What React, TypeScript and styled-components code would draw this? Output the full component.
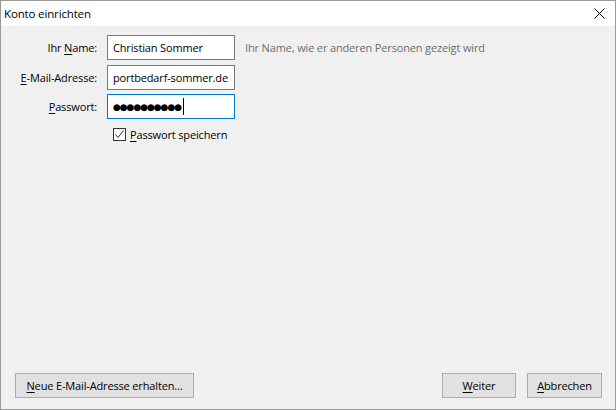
import React from "react";
import styled, { createGlobalStyle } from "styled-components";

const Global = createGlobalStyle`
  html, body { margin: 0; padding: 0; background: #f0f0f0; }
  * { box-sizing: border-box; }
  body { font-family: "Open Sans", "Noto Sans", sans-serif; font-size: 11px; letter-spacing: -0.15px; color: #000; }
`;

const Window = styled.div`
  width: 616px;
  height: 410px;
  border: 1px solid #9a9a9a;
  display: flex;
  flex-direction: column;
  background: #f0f0f0;
`;

const TitleBar = styled.div`
  height: 25px;
  background: #fff;
  display: flex;
  align-items: center;
  justify-content: space-between;
  padding: 0 10px 1px 3px;
  font-size: 11.5px;
`;

const Body = styled.div`
  flex: 1;
  display: flex;
  flex-direction: column;
  justify-content: space-between;
  padding: 9px 13px 11px 14px;
`;

const Form = styled.div`
  display: grid;
  grid-template-columns: 82px 128px auto;
  column-gap: 10px;
  row-gap: 4.5px;
  align-items: center;
`;

const Label = styled.label`
  text-align: right;
  white-space: nowrap;
`;

const Field = styled.div<{ $focus?: boolean }>`
  height: 25px;
  background: #fff;
  border: 1px solid ${(p) => (p.$focus ? "#0078d7" : "#7a7a7a")};
  display: flex;
  align-items: center;
  padding-left: 5px;
  white-space: nowrap;
  overflow: hidden;
`;

const Dots = styled.span`
  font-family: "DejaVu Sans", sans-serif;
  font-size: 9px;
  letter-spacing: -1.05px;
`;

const Caret = styled.span`
  display: inline-block;
  width: 1px;
  height: 17px;
  background: #000;
  margin-left: 2px;
`;

const Hint = styled.span`
  color: #6d6d6d;
  white-space: nowrap;
`;

const CheckRow = styled.div`
  grid-column: 2 / 4;
  display: flex;
  align-items: center;
  gap: 4px;
  padding-left: 6px;
  margin-top: 3px;
`;

const Box = styled.span`
  width: 13px;
  height: 13px;
  border: 1px solid #333;
  background: #fff;
  display: inline-flex;
  align-items: center;
  justify-content: center;
`;

const Buttons = styled.div`
  display: flex;
  align-items: center;
`;

const Button = styled.button<{ $w: number }>`
  width: ${(p) => p.$w}px;
  height: 25px;
  background: #e1e1e1;
  border: 1px solid #adadad;
  font-family: inherit;
  font-size: 11px;
  letter-spacing: -0.15px;
  color: #000;
  padding: 0;
  margin: 0;
`;

const Spacer = styled.div`
  flex: 1;
`;

const RightGroup = styled.div`
  display: flex;
  gap: 11px;
`;

const U = styled.span`
  text-decoration: underline;
  text-underline-offset: 2px;
`;

export default function App() {
  return (
    <>
      <Global />
      <Window>
        <TitleBar>
          <span>Konto einrichten</span>
          <svg width="11" height="11" viewBox="0 0 11 11">
            <path d="M0.5 0.5 L10.5 10.5 M10.5 0.5 L0.5 10.5" stroke="#000" strokeWidth="1" fill="none" />
          </svg>
        </TitleBar>
        <Body>
          <Form>
            <Label>Ihr <U>N</U>ame:</Label>
            <Field>Christian Sommer</Field>
            <Hint>Ihr Name, wie er anderen Personen gezeigt wird</Hint>

            <Label><U>E</U>-Mail-Adresse:</Label>
            <Field>portbedarf-sommer.de</Field>
            <span />

            <Label><U>P</U>asswort:</Label>
            <Field $focus>
              <Dots>●●●●●●●●●●</Dots>
              <Caret />
            </Field>
            <span />

            <CheckRow>
              <Box>
                <svg width="11" height="11" viewBox="0 0 11 11">
                  <path d="M1.5 5.5 L4 8.5 L9.5 1.5" stroke="#333" strokeWidth="1" fill="none" />
                </svg>
              </Box>
              <span><U>P</U>asswort speichern</span>
            </CheckRow>
          </Form>
          <Buttons>
            <Button $w={179}><U>N</U>eue E-Mail-Adresse erhalten...</Button>
            <Spacer />
            <RightGroup>
              <Button $w={74}><U>W</U>eiter</Button>
              <Button $w={75}><U>A</U>bbrechen</Button>
            </RightGroup>
          </Buttons>
        </Body>
      </Window>
    </>
  );
}
